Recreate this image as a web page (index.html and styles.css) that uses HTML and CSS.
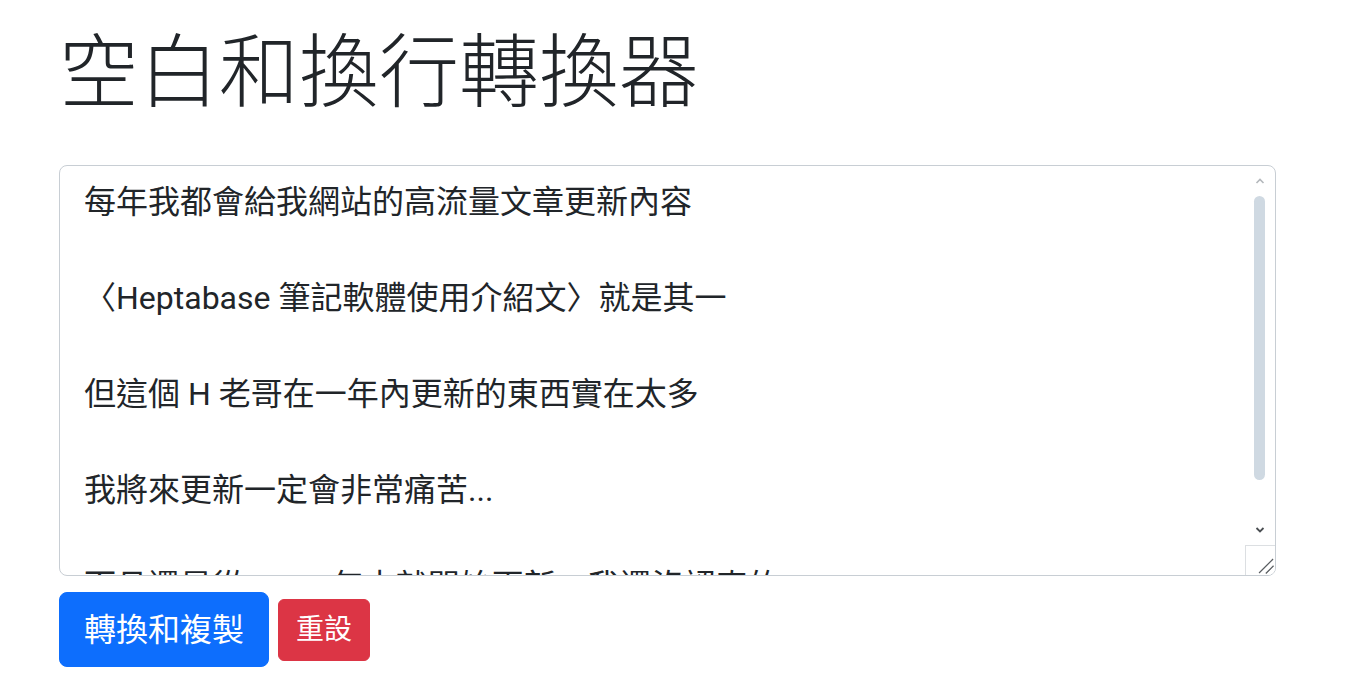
FILE: index.html
```html
<!DOCTYPE html>
<html lang="zh-Hant">
<head>
<meta charset="utf-8">
<title>空白和換行轉換器</title>
<link rel="stylesheet" href="styles.css">
</head>
<body>
<main class="page">
  <h1 class="title">空白和換行轉換器</h1>
  <div class="editor-wrap">
    <textarea class="editor" spellcheck="false">每年我都會給我網站的高流量文章更新內容

〈Heptabase 筆記軟體使用介紹文〉就是其一

但這個 H 老哥在一年內更新的東西實在太多

我將來更新一定會非常痛苦...

而且還是從 2023 年中就開始更新，我還沒認真的</textarea>
    <div class="scrollbar" aria-hidden="true">
      <svg class="arrow" width="30" height="30" viewBox="0 0 30 30"><path d="M11.5 17 L15 13.5 L18.5 17" fill="none" stroke="#b4b8bc" stroke-width="1.6"/></svg>
      <div class="track"><div class="thumb"></div></div>
      <svg class="arrow" width="30" height="30" viewBox="0 0 30 30"><path d="M11.5 13 L15 16.5 L18.5 13" fill="none" stroke="#4a4e52" stroke-width="1.8"/></svg>
    </div>
    <svg class="resizer" width="30" height="30" viewBox="0 0 30 30" aria-hidden="true"><path d="M13.5 28 L28 13.5 M20.5 28.5 L28.5 20.5" fill="none" stroke="#5a5e62" stroke-width="1.3"/></svg>
  </div>
  <div class="actions">
    <button class="btn btn-primary" type="button">轉換和複製</button>
    <button class="btn btn-danger btn-sm" type="button">重設</button>
  </div>
</main>
</body>
</html>
```

FILE: styles.css
```css
html, body {
  margin: 0;
  padding: 0;
  background: #ffffff;
}

body {
  font-family: "Segoe UI", Roboto, "Noto Sans", "Noto Sans CJK TC", sans-serif;
  color: #212529;
}

.page {
  padding: 17px 0 0 59px;
  width: 1217px;
}

.title {
  margin: 0;
  font-family: "Noto Sans CJK TC", sans-serif;
  font-size: 80px;
  font-weight: 300;
  line-height: 96px;
  color: #212529;
}

.editor-wrap {
  position: relative;
  width: 1217px;
  height: 411px;
  margin-top: 52px;
}

.editor {
  display: block;
  box-sizing: border-box;
  width: 100%;
  height: 100%;
  margin: 0;
  padding: 12px 54px 12px 24px;
  border: 1px solid #c8ced4;
  border-radius: 8px;
  font-family: "Segoe UI", Roboto, "Noto Sans CJK TC", sans-serif;
  font-size: 32px;
  line-height: 48px;
  color: #212529;
  background: #ffffff;
  resize: none;
  overflow: hidden;
  outline: none;
}

.scrollbar {
  position: absolute;
  top: 1px;
  right: 1px;
  bottom: 31px;
  width: 30px;
  display: flex;
  flex-direction: column;
}

.arrow {
  display: block;
  flex: none;
}

.track {
  flex: 1;
  position: relative;
}

.thumb {
  position: absolute;
  top: 0;
  left: 9px;
  width: 11px;
  height: 284px;
  border-radius: 6px;
  background: #cfd9e2;
}

.resizer {
  position: absolute;
  right: 1px;
  bottom: 1px;
  box-sizing: border-box;
  border-top: 1px solid #dcdfe2;
  border-left: 1px solid #dcdfe2;
  background: #ffffff;
  border-bottom-right-radius: 7px;
}

.actions {
  display: flex;
  align-items: center;
  gap: 9px;
  margin-top: 16px;
}

.btn {
  display: inline-block;
  box-sizing: border-box;
  border: 1px solid transparent;
  font-family: "Segoe UI", Roboto, "Noto Sans CJK TC", sans-serif;
  font-weight: 400;
  color: #ffffff;
  cursor: pointer;
  text-align: center;
}

.btn-primary {
  width: 210px;
  height: 75px;
  padding: 12px 24px;
  font-size: 32px;
  line-height: 48px;
  border-radius: 8px;
  background: #0d6efd;
  border-color: #0d6efd;
}

.btn-danger {
  background: #dc3545;
  border-color: #dc3545;
}

.btn-sm {
  width: 92px;
  height: 62px;
  padding: 8px 16px;
  font-size: 28px;
  line-height: 42px;
  border-radius: 6px;
}
```
